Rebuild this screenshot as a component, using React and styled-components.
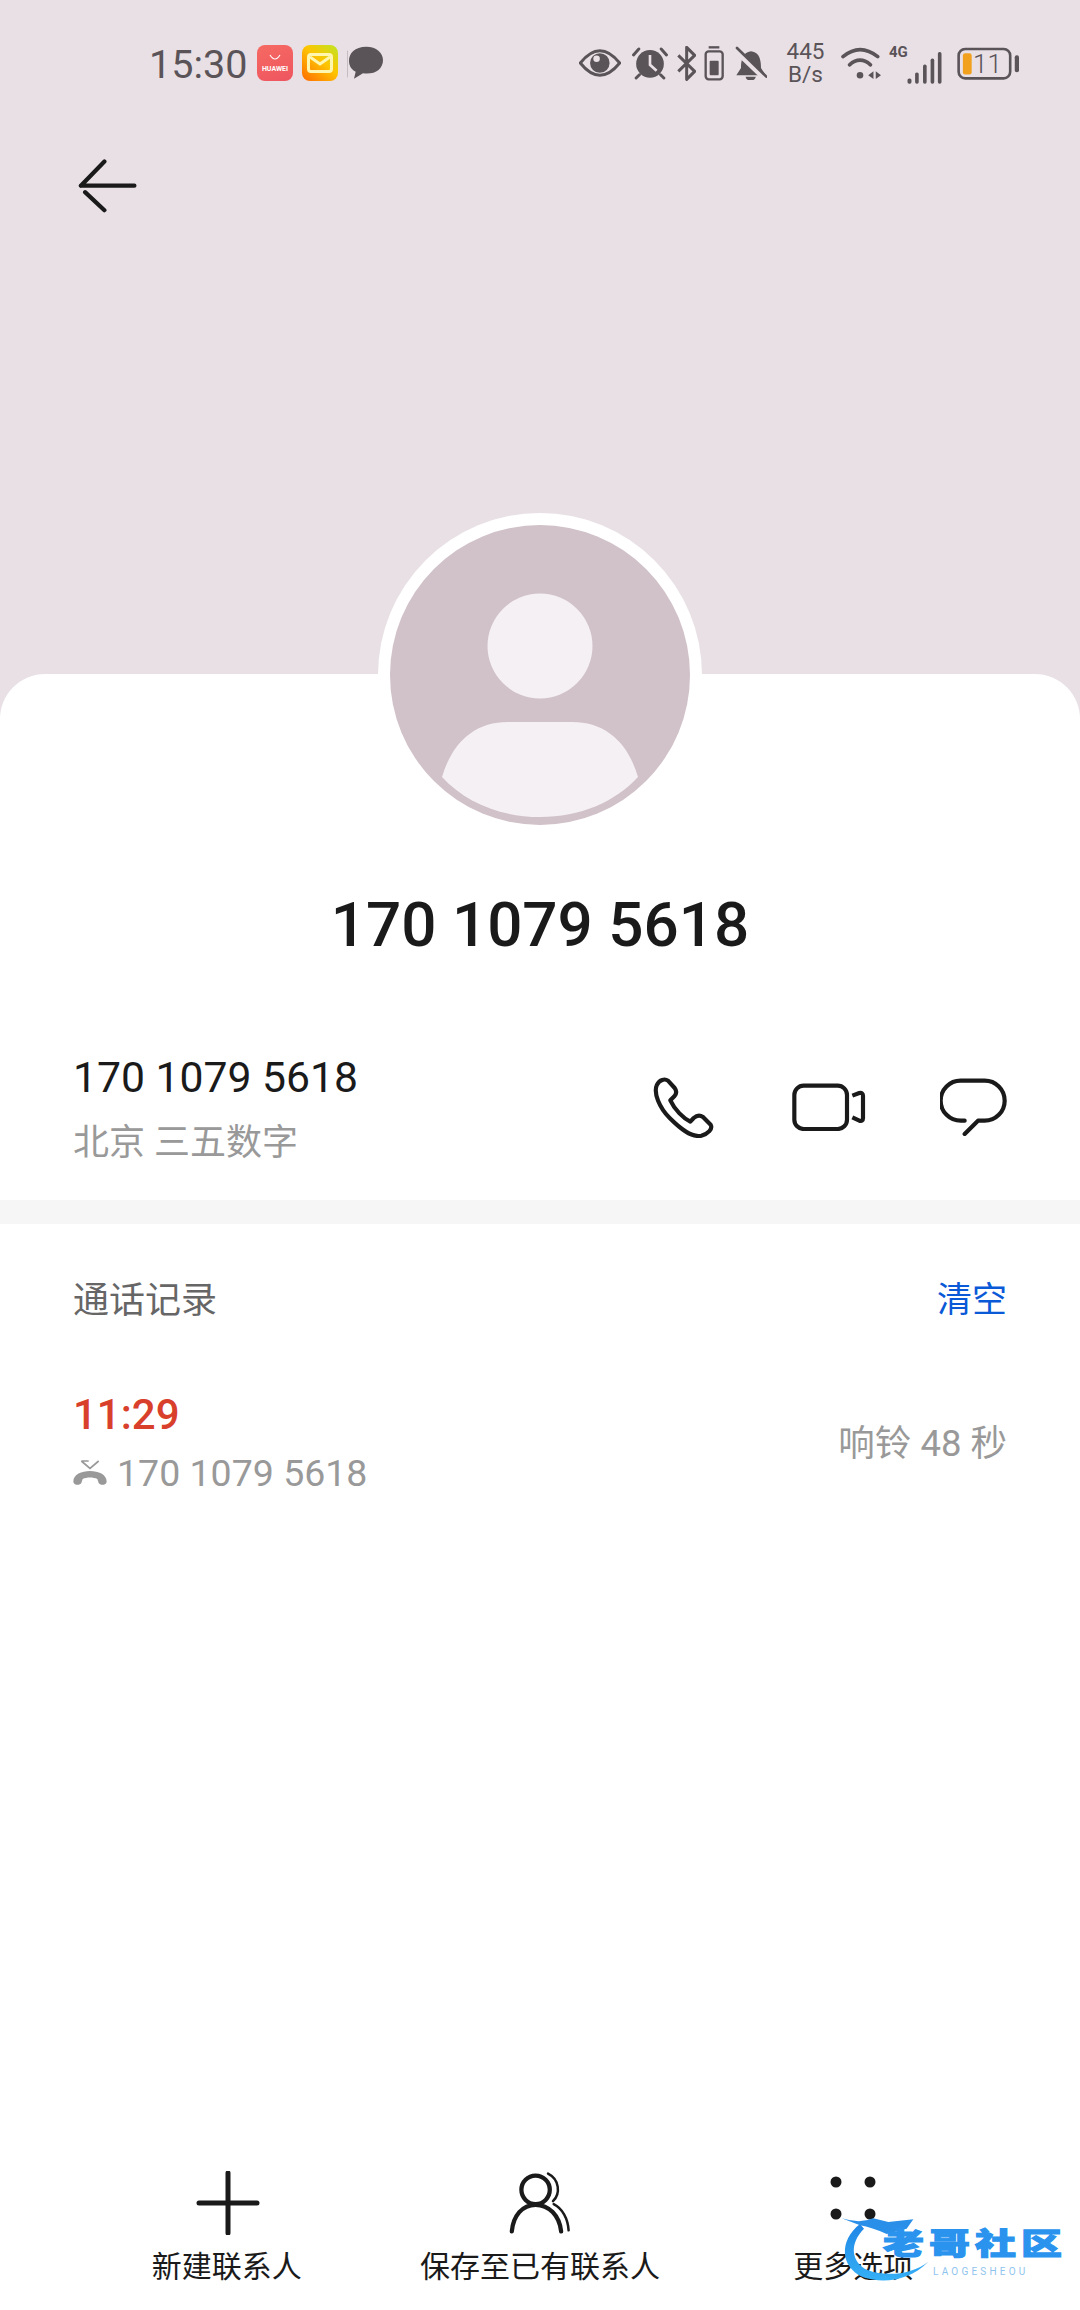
import styled, { createGlobalStyle } from "styled-components";

const GlobalStyle = createGlobalStyle`
  html, body {
    margin: 0;
    padding: 0;
    background: #fff;
  }
  * {
    box-sizing: border-box;
  }
`;

const INK = "#1a1a1a";
const STATUS = "#5a5358";
const BG = "#e8e0e5";

export default function App() {
  return (
    <Page>
      <GlobalStyle />
      <Hero>
        <StatusBar>
          <Time>15:30</Time>
          <StoreIcon>
            <svg width="14" height="8" viewBox="0 0 14 8">
              <path d="M2 1q5 8 10 0" fill="none" stroke="#fff" strokeWidth="1.2" />
            </svg>
            <StoreText>HUAWEI</StoreText>
          </StoreIcon>
          <MailIcon>
            <svg width="26" height="20" viewBox="0 0 26 20">
              <rect x="1.5" y="1.5" width="23" height="17" rx="2.5" fill="none" stroke="#fff6b0" strokeWidth="3" />
              <path d="M3 4l10 7 10-7" fill="none" stroke="#fff6b0" strokeWidth="3" />
            </svg>
          </MailIcon>
          <StatusSvg $w={37} $h={34} viewBox="682 78 111 102">
            <path d="M682 92V172" stroke={STATUS} strokeWidth="1.5" />
            <path d="M740 80C705 80 688 100 688 122C688 140 698 150 708 155L703 176L730 160C765 165 790 148 790 120C790 98 770 80 740 80Z" fill={STATUS} />
          </StatusSvg>
          <StatusRight>
            <StatusSvg $w={42} $h={30} viewBox="58 80 129 90">
              <path d="M62 125Q122 50 183 125Q122 200 62 125Z" fill="none" stroke={STATUS} strokeWidth="9" />
              <circle cx="122" cy="125" r="30" fill={STATUS} />
              <circle cx="112" cy="112" r="10" fill={BG} />
            </StatusSvg>
            <StatusSvg $w={36} $h={33} $ml={11} viewBox="218 74 108 100">
              <circle cx="272" cy="125" r="42" fill={STATUS} />
              <path d="M272 98V128L292 146" fill="none" stroke={BG} strokeWidth="8" />
              <path d="M222 98L238 80M322 98L306 80M230 168L240 158M314 168L304 158" stroke={STATUS} strokeWidth="9" strokeLinecap="round" />
            </StatusSvg>
            <StatusSvg $w={19} $h={35} $ml={9} viewBox="360 72 55 105">
              <path d="M363 100L412 148L388 172V76L412 100L363 148" fill="none" stroke={STATUS} strokeWidth="9" strokeLinejoin="round" />
            </StatusSvg>
            <StatusSvg $w={20} $h={35} $ml={8} viewBox="436 72 60 105">
              <rect x="441" y="88" width="51" height="84" rx="9" fill="none" stroke={STATUS} strokeWidth="7" />
              <path d="M450 76H482" stroke={STATUS} strokeWidth="7" />
              <rect x="453" y="116" width="27" height="44" rx="3" fill={STATUS} />
            </StatusSvg>
            <StatusSvg $w={32} $h={34} $ml={11} viewBox="530 76 96 102">
              <path d="M578 92C605 94 608 122 608 142L622 164H534L548 142C548 122 552 94 578 92Z" fill={STATUS} />
              <path d="M562 168A15 12 0 0 0 592 168Z" fill={STATUS} />
              <path d="M530 88L618 172" stroke={BG} strokeWidth="16" />
              <path d="M536 82L624 168" stroke={STATUS} strokeWidth="8" strokeLinecap="round" />
            </StatusSvg>
            <Speed>
              <span>445</span>
              <span>B/s</span>
            </Speed>
            <StatusSvg $w={40} $h={33} $ml={16} viewBox="844 76 122 100">
              <path d="M850 105Q902 62 956 105" fill="none" stroke={STATUS} strokeWidth="11" strokeLinecap="round" />
              <path d="M870 130Q902 102 934 130" fill="none" stroke={STATUS} strokeWidth="11" strokeLinecap="round" />
              <circle cx="902" cy="162" r="10" fill={STATUS} />
              <path d="M927 162L943 150V173ZM950 150L966 162L950 173Z" fill={STATUS} />
            </StatusSvg>
            <NetworkLabel>4G</NetworkLabel>
            <SignalSvg viewBox="1044 76 108 100">
              <rect x="1045" y="156" width="12" height="16" rx="5" fill={STATUS} />
              <rect x="1068" y="138" width="11" height="34" rx="5" fill={STATUS} />
              <rect x="1092" y="114" width="11" height="58" rx="5" fill={STATUS} />
              <rect x="1115" y="96" width="11" height="76" rx="5" fill={STATUS} />
              <rect x="1137" y="76" width="11" height="96" rx="5" fill={STATUS} />
            </SignalSvg>
            <BatteryWrap>
              <svg width="62" height="33" viewBox="1188 74 190 99">
                <rect x="1193" y="79" width="158" height="90" rx="20" fill="none" stroke={STATUS} strokeWidth="8" />
                <rect x="1365" y="98" width="13" height="52" rx="6" fill={STATUS} />
                <rect x="1206" y="92" width="27" height="65" rx="7" fill="#f2a11e" />
              </svg>
              <BatteryText>11</BatteryText>
            </BatteryWrap>
          </StatusRight>
        </StatusBar>
        <BackIcon width="60" height="54" viewBox="80 87 186 162">
          <path d="M258 167H92M92 167L165 92M105 187L165 243" fill="none" stroke={INK} strokeWidth="13" strokeLinecap="round" />
        </BackIcon>
      </Hero>

      <Panel>
        <AvatarRing>
          <AvatarSvg viewBox="0 0 300 300">
            <circle cx="150" cy="150" r="150" fill="#d1c1c8" />
            <circle cx="150" cy="121" r="52.5" fill="#f5f0f3" />
            <path d="M52 252C62 218 84 197 118 197H182C216 197 238 218 248 252C225 277 190 292 150 292C110 292 75 277 52 252Z" fill="#f5f0f3" />
          </AvatarSvg>
        </AvatarRing>
        <ContactName>170 1079 5618</ContactName>

        <ContactRow>
          <div>
            <PhoneNumber>170 1079 5618</PhoneNumber>
            <Location>北京 三五数字</Location>
          </div>
          <ActionGroup>
            <ActionSvg $w={61} $h={61} viewBox="160 102 183 183">
              <path d="M205 113C195 106 180 110 172 125C160 150 180 195 210 225C240 255 275 285 305 278C325 272 340 258 333 245L310 222C300 215 290 218 282 225L272 236C250 225 225 200 212 172L224 160C231 152 231 143 225 135Z" fill="none" stroke={INK} strokeWidth="12.5" strokeLinejoin="round" />
            </ActionSvg>
            <ActionSvg $w={74} $h={48} $ml={78} viewBox="574 122 222 144">
              <rect x="581" y="130" width="158" height="130" rx="28" fill="none" stroke={INK} strokeWidth="12.5" />
              <path d="M755 160L776 152Q787 150 787 160V228Q787 238 776 235L755 225" fill="none" stroke={INK} strokeWidth="12.5" strokeLinejoin="round" />
            </ActionSvg>
            <ActionSvg $w={68} $h={58} $ml={74} viewBox="1016 112 204 174">
              <path d="M1090 240H1078A59 59 0 0 1 1078 120H1150A59 59 0 0 1 1150 240H1130L1090 280" fill="none" stroke={INK} strokeWidth="12.5" strokeLinecap="round" strokeLinejoin="round" />
            </ActionSvg>
          </ActionGroup>
        </ContactRow>

        <Divider />

        <SectionHeader>
          <SectionTitle>通话记录</SectionTitle>
          <ClearButton>清空</ClearButton>
        </SectionHeader>

        <CallRow>
          <div>
            <CallTime>11:29</CallTime>
            <CallDetail>
              <svg width="34" height="26" viewBox="99 599 102 78">
                <path d="M100 664C100 642 125 632 150 632C175 632 200 642 200 664C200 675 180 676 176 668L172 656C160 650 140 650 128 656L124 668C120 676 100 675 100 664Z" fill="#999" />
                <path d="M124 602H146M124 602L150 624L176 602" fill="none" stroke="#999" strokeWidth="5" />
              </svg>
              <span>170 1079 5618</span>
            </CallDetail>
          </div>
          <CallDuration>响铃 48 秒</CallDuration>
        </CallRow>

        <Toolbar>
          <ToolItem>
            <ToolIcon viewBox="0 0 71 64">
              <path d="M37 2V62M8 32H66" stroke={INK} strokeWidth="5" strokeLinecap="round" />
            </ToolIcon>
            <ToolLabel>新建联系人</ToolLabel>
          </ToolItem>
          <ToolItem>
            <ToolIcon viewBox="1076 65 200 180">
              <circle cx="1165" cy="118" r="40" fill="none" stroke={INK} strokeWidth="12" />
              <path d="M1098 235C1102 190 1128 160 1165 160C1202 160 1232 190 1237 235" fill="none" stroke={INK} strokeWidth="12" strokeLinecap="round" />
              <path d="M1200 72C1232 88 1236 128 1214 150M1216 158C1240 170 1256 198 1258 232" fill="none" stroke={INK} strokeWidth="7" strokeLinecap="round" />
            </ToolIcon>
            <ToolLabel>保存至已有联系人</ToolLabel>
          </ToolItem>
          <ToolItem>
            <ToolIcon viewBox="0 0 71 64">
              <circle cx="18" cy="11" r="5.5" fill={INK} />
              <circle cx="52" cy="11" r="5.5" fill={INK} />
              <circle cx="18" cy="43" r="5.5" fill={INK} />
              <circle cx="52" cy="43" r="5.5" fill={INK} />
            </ToolIcon>
            <ToolLabel>更多选项</ToolLabel>
          </ToolItem>
        </Toolbar>
      </Panel>

      <Watermark>
        <svg width="320" height="160" viewBox="0 0 960 480">
          <defs>
            <linearGradient id="swoosh" x1="0" y1="0" x2="0" y2="1">
              <stop offset="0" stopColor="#1f86e6" />
              <stop offset="1" stopColor="#35b0f6" />
            </linearGradient>
          </defs>
          <path d="M300 222C238 270 238 350 310 382C370 402 450 392 505 335C460 372 380 382 322 360C272 335 268 280 312 236Z" fill="url(#swoosh)" />
          <path d="M245 205Q300 222 340 205L385 216L460 208L440 236L380 252Q335 232 300 226Z" fill="#2a8fe8" />
        </svg>
        <WatermarkText>老哥社区</WatermarkText>
        <WatermarkSub>LAOGESHEOU</WatermarkSub>
      </Watermark>
    </Page>
  );
}

const Page = styled.div`
  position: relative;
  width: 1080px;
  height: 2310px;
  display: flex;
  flex-direction: column;
  overflow: hidden;
  background: ${BG};
  font-family: Roboto, "Noto Sans CJK SC", sans-serif;
`;

const Hero = styled.header`
  height: 674px;
  flex: none;
  padding-top: 43px;
`;

const StatusBar = styled.div`
  height: 40px;
  display: flex;
  align-items: center;
  padding: 0 61px 0 149px;
`;

const Time = styled.span`
  width: 108px;
  margin-top: 3px;
  font-size: 39.5px;
  line-height: 40px;
  color: ${STATUS};
`;

const StoreIcon = styled.div`
  width: 36px;
  height: 36px;
  border-radius: 8px;
  background: linear-gradient(160deg, #f66a62, #ee5560);
  display: flex;
  flex-direction: column;
  align-items: center;
  justify-content: center;
  gap: 3px;
`;

const StoreText = styled.span`
  font-size: 7px;
  line-height: 8px;
  font-weight: 700;
  color: #fff;
`;

const MailIcon = styled.div`
  width: 36px;
  height: 36px;
  margin: 0 9px;
  border-radius: 8px;
  background: linear-gradient(40deg, #ff6a00, #ffc400 55%, #bde626);
  display: flex;
  align-items: center;
  justify-content: center;
`;

const StatusSvg = styled.svg`
  width: ${(p) => p.$w}px;
  height: ${(p) => p.$h}px;
  margin-left: ${(p) => p.$ml || 0}px;
  flex: none;
  display: block;
`;

const SignalSvg = styled.svg`
  width: 36px;
  height: 33px;
  flex: none;
  display: block;
  align-self: flex-end;
  margin-bottom: 1px;
`;

const StatusRight = styled.div`
  margin-left: auto;
  display: flex;
  align-items: center;
`;

const Speed = styled.div`
  width: 39px;
  margin-left: 19px;
  display: flex;
  flex-direction: column;
  align-items: center;
  font-size: 22.5px;
  line-height: 23px;
  color: ${STATUS};
`;

const NetworkLabel = styled.span`
  align-self: flex-start;
  margin: 2px 0 0 8px;
  width: 18px;
  font-size: 15px;
  line-height: 20px;
  font-weight: 700;
  color: ${STATUS};
`;

const BatteryWrap = styled.div`
  position: relative;
  width: 62px;
  height: 33px;
  margin-left: 14px;
  flex: none;

  svg {
    display: block;
  }
`;

const BatteryText = styled.span`
  position: absolute;
  left: 16px;
  top: 3px;
  font-size: 26px;
  line-height: 28px;
  font-weight: 300;
  color: ${STATUS};
`;

const BackIcon = styled.svg`
  display: block;
  margin: 76px 0 0 77px;
`;

const Panel = styled.main`
  flex: 1;
  display: flex;
  flex-direction: column;
  background: #fff;
  border-radius: 45px 45px 0 0;
`;

const AvatarRing = styled.div`
  width: 324px;
  height: 324px;
  flex: none;
  margin: -161px auto 0;
  padding: 12px;
  border-radius: 50%;
  background: #fff;
`;

const AvatarSvg = styled.svg`
  display: block;
  width: 300px;
  height: 300px;
`;

const ContactName = styled.h1`
  margin: 53px 0 0;
  text-align: center;
  font-size: 62px;
  line-height: 70px;
  font-weight: 500;
  color: ${INK};
`;

const ContactRow = styled.section`
  margin-top: 92px;
  padding: 0 73px 32px;
  display: flex;
  justify-content: space-between;
  align-items: center;
`;

const PhoneNumber = styled.div`
  font-size: 42.7px;
  line-height: 50px;
  color: ${INK};
`;

const Location = styled.div`
  margin-top: 16px;
  font-size: 36px;
  line-height: 50px;
  color: #999;
`;

const ActionGroup = styled.div`
  display: flex;
  align-items: center;
  margin: -6px -1px 0 0;
`;

const ActionSvg = styled.svg`
  width: ${(p) => p.$w}px;
  height: ${(p) => p.$h}px;
  margin-left: ${(p) => p.$ml || 0}px;
  display: block;
`;

const Divider = styled.div`
  height: 24px;
  background: #f6f6f6;
`;

const SectionHeader = styled.div`
  padding: 52px 73px 0;
  display: flex;
  justify-content: space-between;
  align-items: center;
`;

const SectionTitle = styled.span`
  font-size: 36px;
  line-height: 50px;
  color: #666;
`;

const ClearButton = styled.span`
  font-size: 35px;
  line-height: 50px;
  color: #0a59d7;
`;

const CallRow = styled.div`
  margin-top: 64px;
  padding: 0 73px;
  display: flex;
  justify-content: space-between;
  align-items: center;
`;

const CallTime = styled.div`
  font-size: 42px;
  line-height: 50px;
  font-weight: 500;
  color: #d9402c;
`;

const CallDetail = styled.div`
  margin-top: 8px;
  display: flex;
  align-items: center;
  gap: 10px;
  font-size: 37.5px;
  line-height: 50px;
  color: #999;
`;

const CallDuration = styled.span`
  font-size: 36.5px;
  line-height: 50px;
  color: #999;
`;

const Toolbar = styled.nav`
  margin-top: auto;
  padding: 0 70px 23px;
  display: grid;
  grid-template-columns: repeat(3, 1fr);
`;

const ToolItem = styled.div`
  display: flex;
  flex-direction: column;
  align-items: center;
  gap: 12px;
`;

const ToolIcon = styled.svg`
  width: 71px;
  height: 64px;
  display: block;
`;

const ToolLabel = styled.span`
  font-size: 30px;
  line-height: 40px;
  white-space: nowrap;
  color: ${INK};
`;

const Watermark = styled.div`
  position: absolute;
  left: 760px;
  top: 2150px;
  width: 320px;
  height: 160px;

  svg {
    position: absolute;
    left: 0;
    top: 0;
  }
`;

const WatermarkText = styled.span`
  position: absolute;
  left: 123px;
  top: 70px;
  font-size: 41px;
  line-height: 48px;
  font-weight: 900;
  letter-spacing: 5px;
  white-space: nowrap;
  transform: scaleY(0.72);
  color: #2a93ee;
  -webkit-text-stroke: 1.5px #2a93ee;
`;

const WatermarkSub = styled.span`
  position: absolute;
  left: 173px;
  top: 116px;
  font-size: 10px;
  line-height: 12px;
  letter-spacing: 3.2px;
  color: #8fc4ee;
`;
